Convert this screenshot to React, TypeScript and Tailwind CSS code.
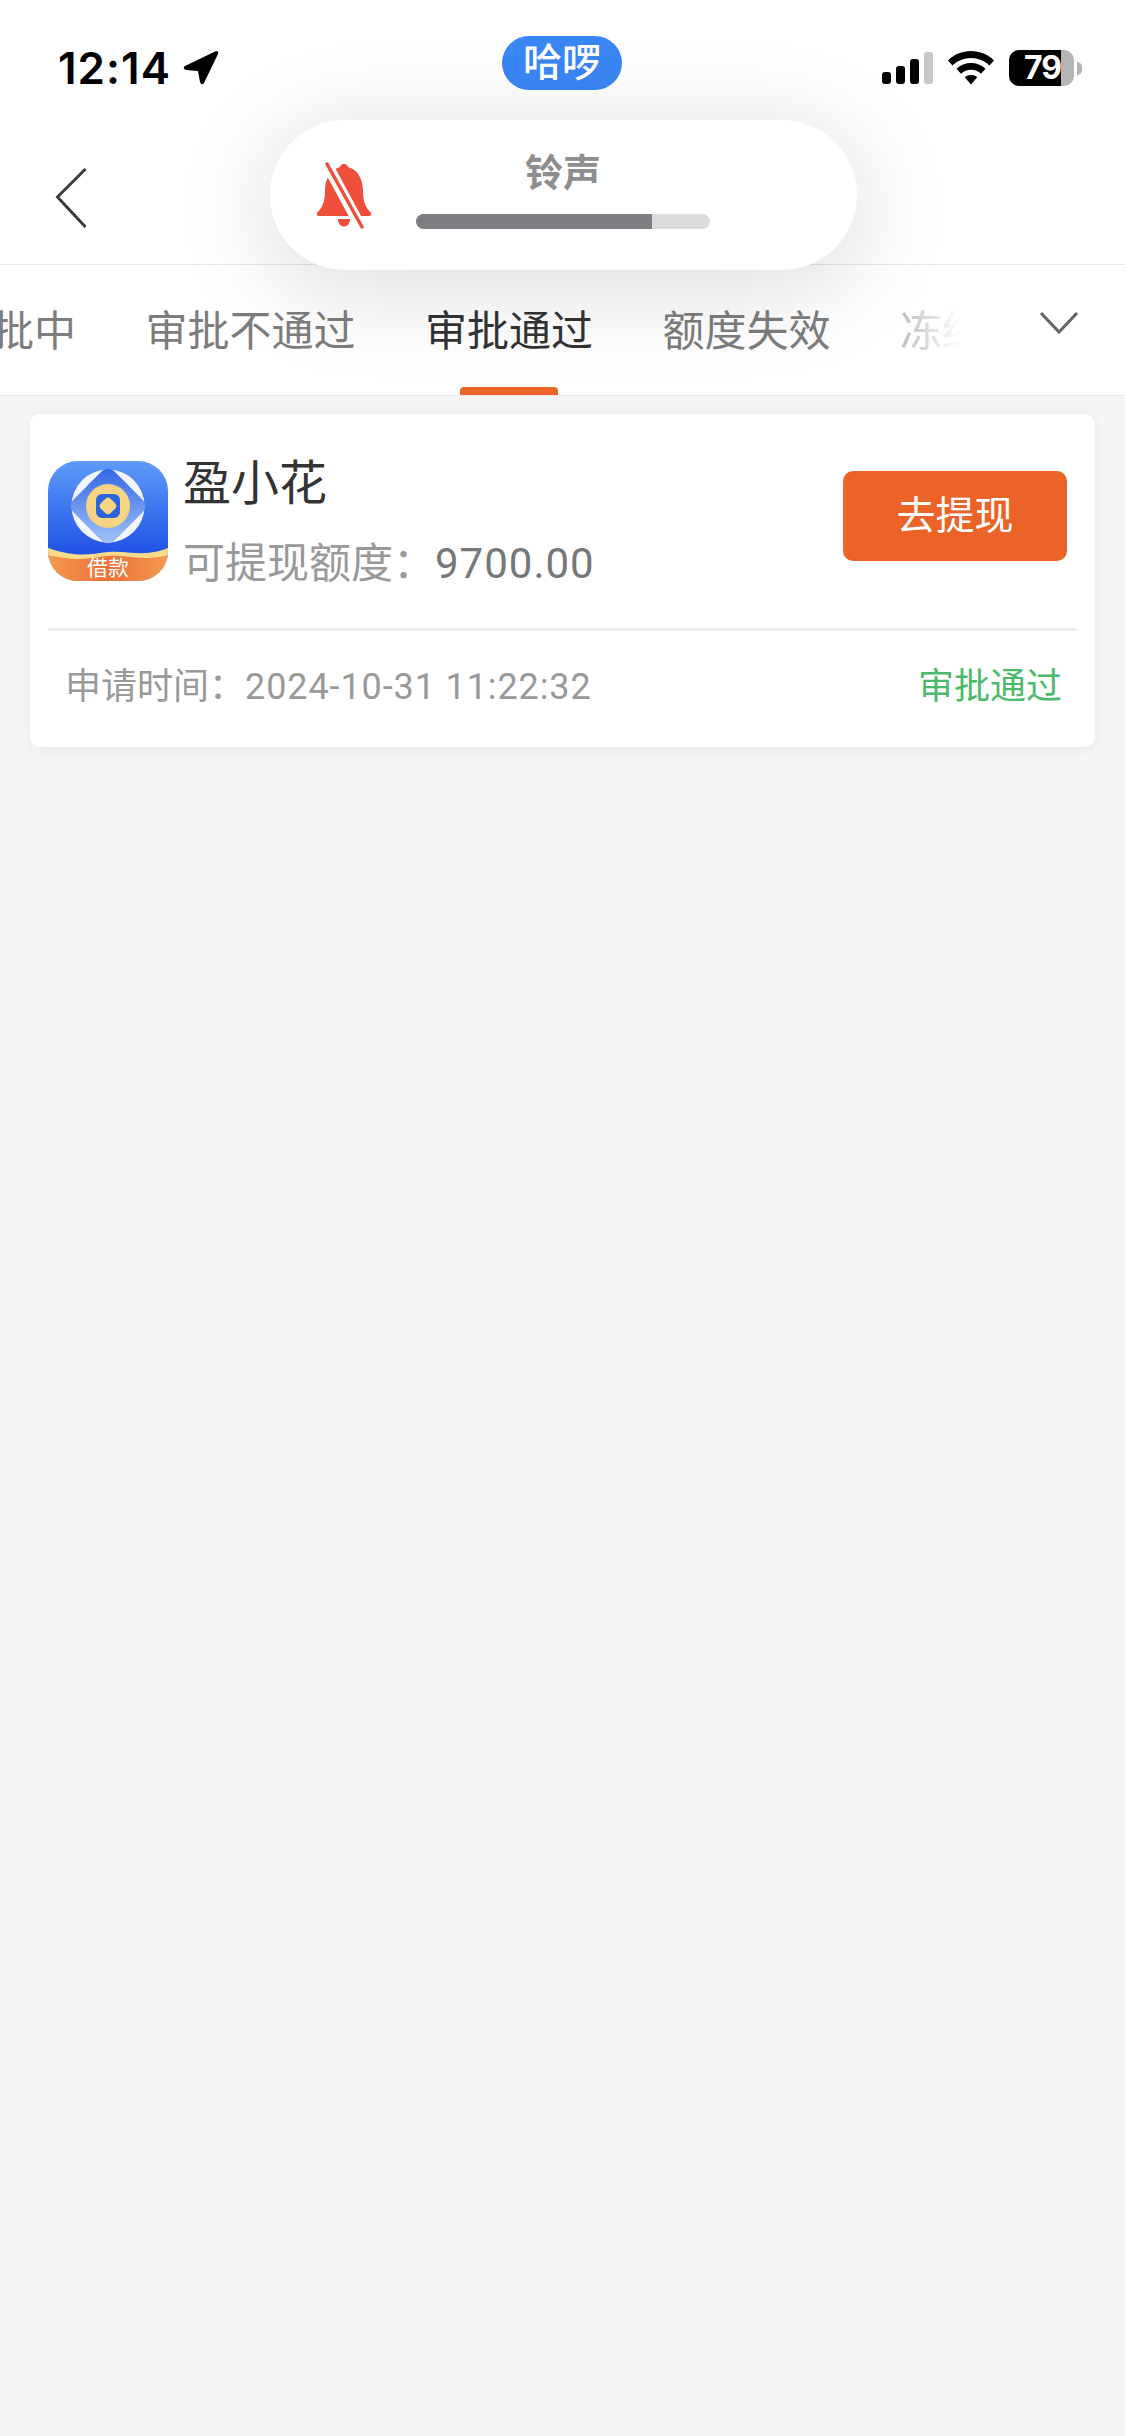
import React from 'react';

const cjk = 'font-["Roboto","Noto_Sans_CJK_SC",sans-serif]';

const tabs = ['审批中', '审批不通过', '审批通过', '额度失效', '冻结中'];

function LoanIcon() {
  return (
    <svg width="120" height="120" viewBox="0 0 120 120" className="shrink-0">
      <defs>
        <linearGradient id="skin" x1="0" y1="0" x2="0" y2="1">
          <stop offset="0" stopColor="#5d9bf8" />
          <stop offset="0.8" stopColor="#1f4fe6" />
        </linearGradient>
        <linearGradient id="band" x1="0" y1="0" x2="1" y2="0">
          <stop offset="0" stopColor="#f59a50" />
          <stop offset="0.5" stopColor="#ec7038" />
          <stop offset="1" stopColor="#f59a50" />
        </linearGradient>
        <linearGradient id="gem" x1="0" y1="0" x2="1" y2="1">
          <stop offset="0" stopColor="#2f62e6" />
          <stop offset="1" stopColor="#a6c6f8" />
        </linearGradient>
        <clipPath id="squircle">
          <rect width="120" height="120" rx="30" />
        </clipPath>
      </defs>
      <g clipPath="url(#squircle)">
        <rect width="120" height="120" fill="url(#skin)" />
        <circle cx="60" cy="45" r="36.5" fill="#f2f5fd" />
        <rect x="31" y="16" width="58" height="58" rx="9" fill="url(#gem)" transform="rotate(45 60 45)" />
        <circle cx="60" cy="45" r="22" fill="#f6d484" />
        <rect x="48" y="33" width="24" height="24" rx="6" fill="#2d62e0" />
        <rect x="53" y="38" width="14" height="14" rx="4" fill="#f6d484" transform="rotate(45 60 45)" />
        <path d="M0 87 C30 97 42 93 60 91 C80 89 95 97 120 87 V120 H0 Z" fill="#f8dc8c" />
        <path d="M0 94 C30 101 42 97 60 95 C80 93 95 101 120 94 V120 H0 Z" fill="url(#band)" />
        <text x="60" y="114" textAnchor="middle" fontSize="21" fill="#fff" fontFamily="Noto Sans CJK SC, sans-serif">借款</text>
      </g>
    </svg>
  );
}

function MutedBell() {
  return (
    <svg width="56" height="68" viewBox="0 0 56 68" className="shrink-0">
      <path
        d="M27 3 a4 4 0 0 1 4 3 C42 9 46 20 46 30 C46 41 49 47 54 52 Q55 55 52 55 H2 Q-1 55 0 52 C5 47 8 41 8 30 C8 20 12 9 23 6 a4 4 0 0 1 4 -3 Z"
        fill="#ef4f3a"
      />
      <path d="M21 58 H33 C33 68 21 68 21 58 Z" fill="#ef4f3a" />
      <path d="M7 -2 L46 70" stroke="#ffffff" strokeWidth="11" />
      <path d="M10 3 L45 66" stroke="#ef4f3a" strokeWidth="3.5" strokeLinecap="round" />
    </svg>
  );
}

function StatusIcons() {
  return (
    <div className="flex items-center">
      <div className="flex items-end gap-[5px] h-[32px]">
        <div className="w-[9px] h-[12px] rounded-[3px] bg-black" />
        <div className="w-[9px] h-[18px] rounded-[3px] bg-black" />
        <div className="w-[9px] h-[25px] rounded-[3px] bg-black" />
        <div className="w-[9px] h-[32px] rounded-[3px] bg-[#c8c8c8]" />
      </div>
      <svg width="46" height="34" viewBox="0 0 46 34" className="ml-[15px]">
        <path d="M23 0 C32 0 40 3.500 46 9.500 L41.500 14.500 C36.500 9.800 30 7 23 7 C16 7 9.500 9.800 4.500 14.500 L0 9.500 C6 3.500 14 0 23 0 Z" fill="#000" />
        <path d="M23 12 C28.500 12 33.500 14 37.500 17.800 L33 22.700 C30.200 20.200 26.800 18.800 23 18.800 C19.200 18.800 15.800 20.200 13 22.700 L8.500 17.800 C12.500 14 17.500 12 23 12 Z" fill="#000" />
        <path d="M23 24 C25.500 24 27.500 24.800 29.300 26.300 L23 33.500 L16.700 26.300 C18.500 24.800 20.500 24 23 24 Z" fill="#000" />
      </svg>
      <div className="ml-[15px] flex items-center">
        <div className="flex h-[36px] w-[65px] overflow-hidden rounded-[10px] bg-[#b5b5b5]">
          <div className="w-[52px] h-full bg-black flex items-center justify-end">
            <span className='text-white font-bold text-[32px] tracking-[-1px] leading-none font-["Inter",sans-serif]'>79</span>
          </div>
        </div>
        <div className="ml-[3px] h-[13px] w-[5px] rounded-r-full bg-[#b5b5b5]" />
      </div>
    </div>
  );
}

export default function App() {
  return (
    <div className={`relative w-[1125px] h-[2436px] overflow-hidden bg-[#f5f5f6] ${cjk}`}>
      <div className="bg-white">
        {/* status bar */}
        <div className="flex items-center justify-between h-[136px] pl-[58px] pr-[43px]">
          <div className="flex items-center gap-[12px]">
            <span className='text-[44px] leading-none font-semibold tracking-[1px] text-black font-["Inter",sans-serif]'>12:14</span>
            <svg width="36" height="36" viewBox="0 0 36 36">
              <path d="M2 16 L32 1.500 Q36 0 35 4 L21 33 Q18.500 36 17 32 L15 21 L3 20 Q-1 18 2 16 Z" fill="#000" />
            </svg>
          </div>
          <StatusIcons />
        </div>

        {/* nav */}
        <div className="flex items-center h-[129px] pl-[55px] pb-[4px] border-b border-[#e8e8e8]">
          <svg width="33" height="60" viewBox="0 0 33 62">
            <path d="M31 1 L2 30 L31 61" fill="none" stroke="#3c3a34" strokeWidth="3" />
          </svg>
        </div>

        {/* tabs */}
        <div className="flex h-[131px] border-b border-[#e9e9e9]">
          <div className="relative w-[960px] overflow-hidden">
            <div className="flex gap-[69.5px] h-full -ml-[50px]">
              {tabs.map((t, i) => (
                <div
                  key={t}
                  className={`relative flex items-center shrink-0 pt-[3px] text-[42px] leading-none ${i === 2 ? 'text-[#333333]' : 'text-[#7d7d7d]'}`}
                >
                  {t}
                  {i === 2 && <div className="absolute bottom-0 left-1/2 -translate-x-1/2 w-[98px] h-[8px] rounded-t-[4px] bg-[#ec6328]" />}
                </div>
              ))}
            </div>
            <div className="absolute inset-y-0 right-0 w-[70px] bg-gradient-to-r from-white/40 to-white" />
          </div>
          <div className="flex-1 pt-[47px] pl-[80px]">
            <svg width="38" height="22" viewBox="0 0 38 22">
              <path d="M1 1 L19 20 L37 1" fill="none" stroke="#666666" strokeWidth="3" />
            </svg>
          </div>
        </div>
      </div>

      {/* order card */}
      <div className="mx-[30px] mt-[18px] h-[333px] rounded-[10px] bg-white shadow-[0_2px_14px_rgba(0,0,0,0.05)]">
        <div className="flex items-center h-[214px] pl-[18px] pr-[28px]">
          <LoanIcon />
          <div className="flex flex-col gap-[35px] ml-[15px] mt-[3px] flex-1">
            <div className="text-[48px] leading-[48px] text-[#333333]">盈小花</div>
            <div className="flex items-center text-[42px] leading-[42px]">
              <span className="text-[#999999]">可提现额度：</span>
              <span className="text-[#777777] tracking-[1px]">9700.00</span>
            </div>
          </div>
          <button className="w-[224px] h-[90px] -mt-[10px] rounded-[10px] bg-[#ec6328] text-white text-[39px] leading-none">去提现</button>
        </div>
        <div className="mx-[18px] h-[3px] bg-[#eeeeee]" />
        <div className="flex items-center justify-between h-[112px] pl-[35px] pr-[33px] text-[36px] leading-none">
          <div className="text-[#999999]">
            <span>申请时间：</span>
            <span className="tracking-[0.9px]">2024-10-31 11:22:32</span>
          </div>
          <span className="text-[#4cb96b]">审批通过</span>
        </div>
      </div>

      {/* dynamic island badge */}
      <div className="absolute left-[502px] top-[36px] flex items-center justify-center w-[120px] h-[54px] rounded-[27px] bg-[#3a86f5] text-white text-[39px] leading-none font-medium">
        哈啰
      </div>

      {/* ringer toast */}
      <div className="absolute left-[270px] top-[120px] flex items-center w-[587px] h-[150px] rounded-[75px] bg-white shadow-[0_15px_100px_rgba(0,0,0,0.15)] pl-[47px]">
        <MutedBell />
        <div className="flex flex-col items-center ml-[43px] w-[294px]">
          <div className="text-[38px] leading-none font-bold text-[#8e8e8e] -mt-[8px]">铃声</div>
          <div className="w-full h-[15px] mt-[22px] rounded-full overflow-hidden bg-[#dcdcdc]">
            <div className="w-[236px] h-full bg-[#7e7e82]" />
          </div>
        </div>
      </div>
    </div>
  );
}
